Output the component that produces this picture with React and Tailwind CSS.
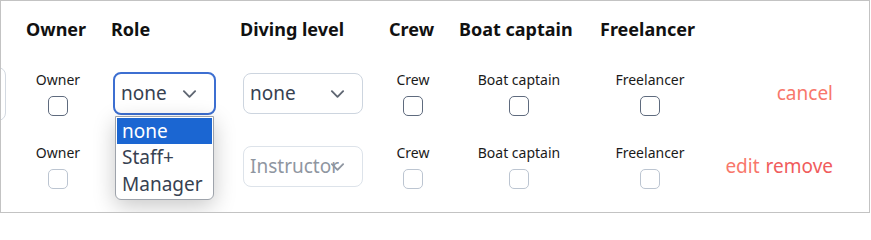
const font = { fontFamily: '"Noto Sans", "Open Sans", sans-serif' }

function Chevron({ className = '' }) {
  return (
    <svg viewBox="0 0 16 10" className={className} fill="none" stroke="currentColor" strokeWidth="2" strokeLinecap="round" strokeLinejoin="round">
      <path d="M2 2l6 6 6-6" />
    </svg>
  )
}

function Check({ label, disabled }) {
  return (
    <div className="flex flex-col items-center gap-[7px]">
      <span className="text-[14px] leading-[18px] text-[#1a1a1a]">{label}</span>
      <span
        className={`block w-[20px] h-[20px] rounded-[5px] border-[1.5px] bg-white ${
          disabled ? 'border-[#bcc5d1]' : 'border-[#5f6b7e]'
        }`}
      />
    </div>
  )
}

function FakeSelect({ value, width, disabled, focused }) {
  return (
    <div
      className={`relative flex items-center rounded-[8px] bg-white ${width} ${
        focused
          ? 'h-[43px] border-2 border-[#3d6fd1] pl-[6px]'
          : disabled
          ? 'h-[41px] border border-[#dde3ea] pl-[6px]'
          : 'h-[41px] border border-[#cdd5df] pl-[6px]'
      }`}
    >
      <span className={`text-[19px] whitespace-nowrap overflow-hidden ${disabled ? 'text-[#8f96a1]' : 'text-[#374151]'}`}>
        {value}
      </span>
      <Chevron className={`absolute right-[17px] top-1/2 -translate-y-1/2 w-[15px] h-[10px] ${disabled ? 'text-[#8f96a1]' : 'text-[#5f6672]'}`} />
    </div>
  )
}

function Row({ editing }) {
  return (
    <div className="flex h-[73px] items-center">
      <div className="w-[17px] flex items-center">
        {editing && <div className="-ml-[30px] w-[35px] h-[54px] rounded-[8px] border border-[#d3d9e1] bg-white" />}
      </div>
      <div className="w-[80px] flex justify-center">
        <Check label="Owner" disabled={!editing} />
      </div>
      <div className="w-[134px] pl-[15px]">
        {editing ? (
          <div className="relative w-[103px]">
            <FakeSelect value="none" width="w-[103px]" focused />
            <div className="absolute left-[2px] top-[44px] w-[99px] h-[84px] rounded-b-[6px] border border-[#9ea3ab] bg-white shadow-[0_6px_22px_rgba(0,0,0,0.22)] pt-[1px] z-10">
              <div className="h-[26px] mx-px bg-[#1b66d2] text-white text-[19px] leading-[26px] pl-[5px]">none</div>
              <div className="h-[27px] text-[#374151] text-[19px] leading-[27px] pl-[6px]">Staff+</div>
              <div className="h-[27px] text-[#374151] text-[19px] leading-[27px] pl-[6px]">Manager</div>
            </div>
          </div>
        ) : (
          <div className="w-[103px]" />
        )}
      </div>
      <div className="w-[148px] pl-[11px]">
        <FakeSelect value={editing ? 'none' : 'Instructor'} width="w-[120px]" disabled={!editing} />
      </div>
      <div className="w-[66px] flex justify-center">
        <Check label="Crew" disabled={!editing} />
      </div>
      <div className="w-[146px] flex justify-center">
        <Check label="Boat captain" disabled={!editing} />
      </div>
      <div className="w-[116px] flex justify-center">
        <Check label="Freelancer" disabled={!editing} />
      </div>
      <div className="flex-1 flex justify-end pr-[36px] text-[19px] gap-[6px]">
        {editing ? (
          <span className="text-[#f8776b]">cancel</span>
        ) : (
          <>
            <span className="text-[#f8776b]">edit</span>
            <span className="text-[#f05c5c]">remove</span>
          </>
        )}
      </div>
    </div>
  )
}

export default function App() {
  return (
    <div style={font} className="w-[871px] h-[215px] bg-white">
      <div className="w-[870px] h-[213px] border border-[#c3c3c3] overflow-hidden">
        <div className="flex h-[56px] items-center text-[18px] font-bold text-[#111]">
          <div className="w-[17px]" />
          <div className="w-[80px] pl-[8px]">Owner</div>
          <div className="w-[134px] pl-[13px]">Role</div>
          <div className="w-[148px] pl-[8px]">Diving level</div>
          <div className="w-[66px] pl-[9px]">Crew</div>
          <div className="w-[146px] pl-[13px]">Boat captain</div>
          <div className="w-[116px] pl-[8px]">Freelancer</div>
        </div>
        <Row editing />
        <Row />
      </div>
    </div>
  )
}
